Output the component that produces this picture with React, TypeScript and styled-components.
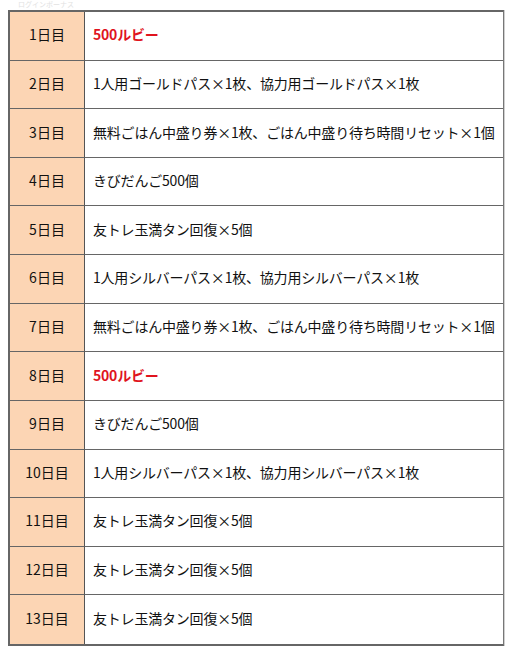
import React, { FC } from "react";
import styled, { createGlobalStyle } from "styled-components";

const GlobalStyle = createGlobalStyle`
  body {
    margin: 0;
    background: #fff;
    font-family: "Noto Sans CJK JP", "Noto Sans", sans-serif;
  }
`;

const StyledPage = styled.div`
  width: 512px;
  height: 659px;
  padding: 0 8px;
  box-sizing: border-box;
  overflow: hidden;
`;

const StyledCaption = styled.div`
  height: 10px;
  padding-left: 10px;
  font-size: 7px;
  line-height: 9px;
  color: #e2e2e2;
  white-space: nowrap;
`;

const StyledTable = styled.div`
  width: 496px;
  height: 636px;
  display: grid;
  grid-template-columns: 75px 1fr;
  grid-template-rows: repeat(13, 1fr);
  border: 2px solid #666;
  border-right: 1px solid #777;
  box-shadow: 1px 0 0 #cfcfcf;
  box-sizing: border-box;
`;

const StyledDay = styled.div<{ $last: boolean }>`
  display: flex;
  align-items: center;
  justify-content: center;
  padding-bottom: 3px;
  background: #fcd5b4;
  border-right: 1px solid #555;
  border-bottom: ${({ $last }) => ($last ? "none" : "1px solid #666")};
  font-size: 14px;
  color: #111;
`;

const StyledReward = styled.div<{ $last: boolean; $red: boolean }>`
  display: flex;
  align-items: center;
  padding: 0 0 3px 8px;
  border-bottom: ${({ $last }) => ($last ? "none" : "1px solid #666")};
  font-size: 14px;
  white-space: nowrap;
  letter-spacing: -0.2px;
  font-weight: ${({ $red }) => ($red ? 700 : 400)};
  color: ${({ $red }) => ($red ? "#e0141e" : "#111")};
`;

const rewards = [
  "500ルビー",
  "1人用ゴールドパス×1枚、協力用ゴールドパス×1枚",
  "無料ごはん中盛り券×1枚、ごはん中盛り待ち時間リセット×1個",
  "きびだんご500個",
  "友トレ玉満タン回復×5個",
  "1人用シルバーパス×1枚、協力用シルバーパス×1枚",
  "無料ごはん中盛り券×1枚、ごはん中盛り待ち時間リセット×1個",
  "500ルビー",
  "きびだんご500個",
  "1人用シルバーパス×1枚、協力用シルバーパス×1枚",
  "友トレ玉満タン回復×5個",
  "友トレ玉満タン回復×5個",
  "友トレ玉満タン回復×5個",
];

const App: FC = () => {
  return (
    <StyledPage>
      <GlobalStyle />
      <StyledCaption>ログインボーナス</StyledCaption>
      <StyledTable>
        {rewards.map((reward, i) => {
          const last = i === rewards.length - 1;
          return (
            <React.Fragment key={i}>
              <StyledDay $last={last}>{i + 1}日目</StyledDay>
              <StyledReward $last={last} $red={reward === "500ルビー"}>
                {reward}
              </StyledReward>
            </React.Fragment>
          );
        })}
      </StyledTable>
    </StyledPage>
  );
};

export default App;
